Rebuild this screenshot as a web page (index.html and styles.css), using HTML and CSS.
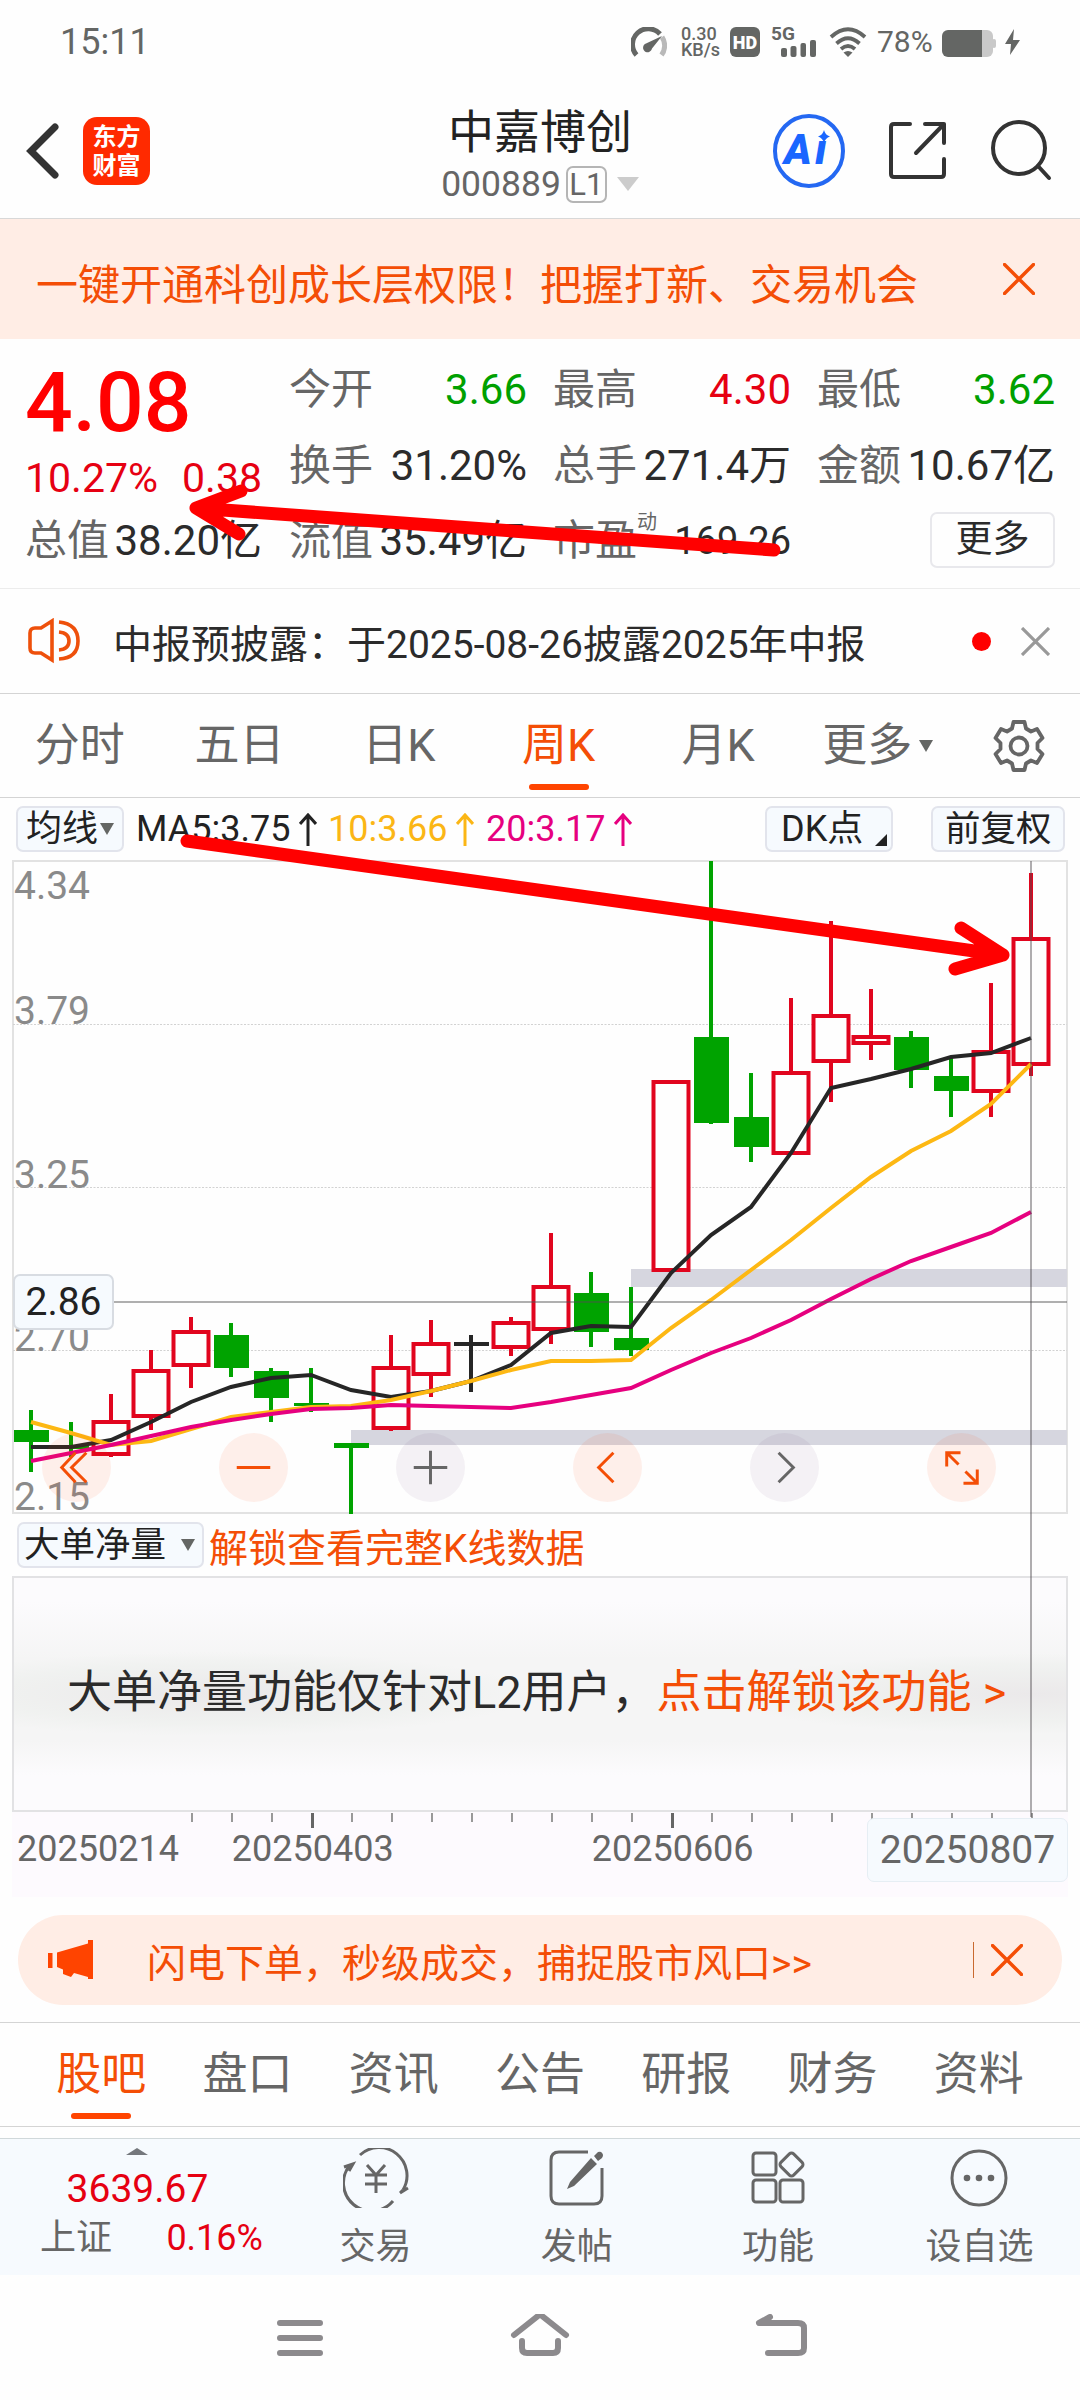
FILE: index.html
```
<!DOCTYPE html>
<html lang="zh-CN">

<head>
  <meta charset="UTF-8">
  <title>中嘉博创 000889</title>
  <link rel="stylesheet" href="styles.css">
</head>

<body>
  <div class="status">
    <div class="time">15:11</div>
    <div class="status-icons">
      <svg class="gauge" width="36" height="30" viewBox="0 0 36 30">
        <path d="M5.500 28A15.500 15.500 0 0 1 29 7" fill="none" stroke="#646664" stroke-width="5" />
        <path d="M31 10A15.500 15.500 0 0 1 30.500 28" fill="none" stroke="#b9b9b9" stroke-width="5" />
        <path d="M31 9L21 21.500A4.500 4.500 0 1 1 15 16.500Z" fill="#646664" />
      </svg>
      <div class="speed">0.30<br>KB/s</div>
      <div class="hd">HD</div>
      <div class="signal">
        <span>5G</span>
        <svg width="36" height="17" viewBox="0 0 36 17">
          <rect x="0" y="8" width="6" height="9" rx="2" />
          <rect x="9.500" y="6" width="6" height="11" rx="2" />
          <rect x="19.500" y="3" width="5.500" height="14" rx="2" />
          <rect x="29" y="0" width="6" height="17" rx="2" />
        </svg>
      </div>
      <svg class="wifi" width="38" height="30" viewBox="0 0 38 30">
        <g fill="none" stroke="#646664" stroke-width="3.800">
          <path d="M2 10Q19-5.500 36 10" />
          <path d="M7.500 16.500Q19 6 30.500 16.500" />
          <path d="M12 22Q19 16 26 22" />
        </g>
        <path d="M19 30L14.500 25.500Q19 22.500 23.500 25.500Z" fill="#646664" />
      </svg>
      <div class="percent">78%</div>
      <svg class="battery" width="54" height="27" viewBox="0 0 54 27">
        <path d="M40 0h5a6 6 0 0 1 6 6v15a6 6 0 0 1-6 6h-5z" fill="#c9c9c9" />
        <rect x="50" y="9" width="4" height="9" rx="2" fill="#c9c9c9" />
        <path d="M6 0h34v27H6a6 6 0 0 1-6-6V6a6 6 0 0 1 6-6z" fill="#646664" />
      </svg>
      <svg width="15" height="26" viewBox="0 0 15 26">
        <path d="M9 0L0 15h6l-1 11 10-15H8z" fill="#646664" />
      </svg>
    </div>
  </div>

  <div class="header">
    <div class="header-left">
      <svg width="34" height="56" viewBox="0 0 34 56">
        <path d="M29 4L5 28l24 24" fill="none" stroke="#333" stroke-width="7" stroke-linecap="round" />
      </svg>
      <div class="logo">东方<br>财富</div>
    </div>
    <div class="header-title">
      <div class="name">中嘉博创</div>
      <div class="code">000889<span class="level">L1</span><i class="down"></i></div>
    </div>
    <div class="header-right">
      <svg width="74" height="76" viewBox="0 0 74 76">
        <ellipse cx="37" cy="38" rx="34" ry="35" fill="none" stroke="#2468f2" stroke-width="4" />
        <text class="ai" x="12" y="51" transform="skewX(0)">A</text>
        <text class="ai" x="43" y="51">ı</text>
        <path d="M52 17q1.200 5 6 6.500q-4.800 1.500-6 6.500q-1.200-5-6-6.500q4.800-1.500 6-6.500z" fill="#1a66ff" />
      </svg>
      <svg width="60" height="62" viewBox="0 0 60 62" fill="none" stroke="#333" stroke-width="4" stroke-linecap="round" stroke-linejoin="round">
        <path d="M22 4H6Q3 4 3 7V54Q3 57 6 57H53Q56 57 56 54V39" />
        <path d="M37 4H56V23M56 4L28 33" />
      </svg>
      <svg width="62" height="62" viewBox="0 0 62 62" fill="none" stroke="#333" stroke-width="4" stroke-linecap="round">
        <circle cx="29" cy="28" r="26" />
        <path d="M48 46L59 58" />
      </svg>
    </div>
  </div>

  <div class="banner">
    <span>一键开通科创成长层权限！把握打新、交易机会</span>
    <svg width="32" height="32" viewBox="0 0 32 32"><path d="M1.500 1.500l29 29m0-29l-29 29" /></svg>
  </div>

  <div class="quote">
    <div class="price">
      <div class="last">4.08</div>
      <div class="change red"><span>10.27%</span><span>0.38</span></div>
      <div class="cell"><label>总值</label><b>38.20亿</b></div>
    </div>
    <div class="cells">
      <div class="cell"><label>今开</label><b class="green">3.66</b></div>
      <div class="cell"><label>最高</label><b class="red">4.30</b></div>
      <div class="cell"><label>最低</label><b class="green">3.62</b></div>
      <div class="cell"><label>换手</label><b>31.20%</b></div>
      <div class="cell"><label>总手</label><b>271.4万</b></div>
      <div class="cell"><label>金额</label><b>10.67亿</b></div>
      <div class="cell"><label>流值</label><b>35.49亿</b></div>
      <div class="cell"><label>市盈<sup>动</sup></label><b class="small">169.26</b></div>
      <div class="cell end"><span class="more">更多</span></div>
    </div>
  </div>

  <div class="notice">
    <svg width="52" height="46" viewBox="0 0 52 46" fill="none" stroke="#ee500b" stroke-width="3.600">
      <path d="M24 3L13 10H7Q2 10 2 15V30Q2 35 7 35H13L24 42Z" />
      <path d="M31 14Q41 15 41 23Q41 31 31 32M31 4Q50 6 50 23Q50 40 31 41" />
    </svg>
    <span class="notice-text">中报预披露：于2025-08-26披露2025年中报</span>
    <i class="dot"></i>
    <svg class="grey-x" width="29" height="29" viewBox="0 0 29 29"><path d="M1 1l27 27m0-27L1 28" /></svg>
  </div>

  <div class="period">
    <div class="tab">分时</div>
    <div class="tab">五日</div>
    <div class="tab">日K</div>
    <div class="tab active">周K</div>
    <div class="tab">月K</div>
    <div class="tab">更多<i class="caret"></i></div>
    <div class="gear">
      <svg width="54" height="54" viewBox="-27 -27 54 54" fill="none" stroke="#666" stroke-width="3.800">
        <path id="gear" stroke-linejoin="round" d="M-5.500-24H5.500L7-17.500L12-14.500L18-17L23.500-8L18.500-3V3L23.500 8L18 17L12 14.500L7 17.500L5.500 24H-5.500L-7 17.500L-12 14.500L-18 17L-23.500 8L-18.500 3V-3L-23.500-8L-18-17L-12-14.500L-7-17.500Z" />
        <circle r="8.500" />
      </svg>
    </div>
  </div>

  <div class="kline">
    <div class="ma-row">
      <div class="chip">均线<i class="caret"></i></div>
      <span class="ma ma5">MA5:3.75<svg width="18" height="33" viewBox="0 0 18 33"><path d="M9 33V2M1 11l8-9 8 9" /></svg></span>
      <span class="ma ma10">10:3.66<svg width="18" height="33" viewBox="0 0 18 33"><path d="M9 33V2M1 11l8-9 8 9" /></svg></span>
      <span class="ma ma20">20:3.17<svg width="18" height="33" viewBox="0 0 18 33"><path d="M9 33V2M1 11l8-9 8 9" /></svg></span>
      <div class="chip dk">DK点</div>
      <div class="chip fq">前复权</div>
    </div>

    <div class="chart">
      <svg id="chart" width="1080" height="654" viewBox="0 860 1080 654"></svg>
      <div class="tools">
        <button class="tool"><svg viewBox="-35 -35 70 70"><path d="M10-15L-5 0L10 15M-1-15L-15 0L-1 15" /></svg></button>
        <button class="tool"><svg viewBox="-35 -35 70 70"><path d="M-17 0H17" /></svg></button>
        <button class="tool grey"><svg viewBox="-35 -35 70 70"><path d="M-17 0H17M0-17V17" /></svg></button>
        <button class="tool"><svg viewBox="-35 -35 70 70"><path d="M6-15L-9 0L6 15" /></svg></button>
        <button class="tool grey"><svg viewBox="-35 -35 70 70"><path d="M-6-15L9 0L-6 15" /></svg></button>
        <button class="tool"><svg viewBox="-35 -35 70 70"><path d="M-1-15H-15V-1M-15-15L-3-3M2 16H16V2M16 16L4 4" /></svg></button>
      </div>
      <div class="cross-h"></div>
      <div class="cross-price">2.86</div>
    </div>

    <div class="sub-row">
      <div class="chip">大单净量<i class="caret"></i></div>
      <span>解锁查看完整K线数据</span>
    </div>

    <div class="locked">大单净量功能仅针对L2用户，<em>点击解锁该功能 &gt;</em></div>

    <div class="axis">
      <svg id="ticks" width="1080" height="17" viewBox="0 0 1080 17"></svg>
      <div class="dates">
        <span>20250214</span>
        <span>20250403</span>
        <span>20250606</span>
        <span class="current">20250807</span>
      </div>
    </div>
    <div class="cross-v"></div>
  </div>

  <div class="promo">
    <svg width="46" height="40" viewBox="0 0 46 40" fill="#ff4400">
      <path d="M0 13h4.500v15H0zM9 12.500L40 3.500V0h5v39h-5v-2L26 33l-3 4-8-3v-4.500L9 27z" />
    </svg>
    <span>闪电下单，秒级成交，捕捉股市风口&gt;&gt;</span>
    <i></i>
    <svg class="close" width="32" height="32" viewBox="0 0 32 32"><path d="M1.500 1.500l29 29m0-29l-29 29" /></svg>
  </div>

  <div class="sections">
    <div class="tab active">股吧</div>
    <div class="tab">盘口</div>
    <div class="tab">资讯</div>
    <div class="tab">公告</div>
    <div class="tab">研报</div>
    <div class="tab">财务</div>
    <div class="tab">资料</div>
  </div>

  <div class="toolbar">
    <div class="index">
      <i class="up"></i>
      <div class="point">3639.67</div>
      <div class="rate"><span>上证</span><span class="red">0.16%</span></div>
    </div>
    <div class="action">
      <svg viewBox="-33 -30 66 60">
        <path d="M-16-23A28 28 0 0 1 27 12M17 23A28 28 0 0 1-26-13" />
        <path d="M24 15L32 10M27 12L24 15M-32-11L-23-14L-27-7" />
        <path d="M-9-13L0-3L9-13M0-3V15M-11-3H11M-11 6H11" />
      </svg>
      <span>交易</span>
    </div>
    <div class="action">
      <svg viewBox="-33 -30 66 60">
        <path d="M11-26H-18Q-26-26-26-18V18Q-26 26-18 26H17Q25 26 25 18V-10" />
        <path class="solid" d="M14-20L20-14L-3 8L-10 11L-7 4ZM17-22L21-26Q24-27 25-25Q27-23 25-20L21-17Z" />
      </svg>
      <span>发帖</span>
    </div>
    <div class="action">
      <svg viewBox="-33 -30 66 60">
        <rect x="-25" y="-25" width="23" height="22" rx="3" />
        <rect x="-25" y="2" width="23" height="22" rx="3" />
        <rect x="2" y="2" width="23" height="22" rx="3" />
        <rect x="4.500" y="-22.500" width="18" height="18" rx="3" transform="rotate(45 13.500 -13.500)" />
      </svg>
      <span>功能</span>
    </div>
    <div class="action">
      <svg viewBox="-33 -30 66 60">
        <ellipse rx="27" ry="27" />
        <g class="solid"><circle cx="-12" r="3.300" /><circle r="3.300" /><circle cx="12" r="3.300" /></g>
      </svg>
      <span>设自选</span>
    </div>
  </div>

  <div class="sysnav">
    <svg viewBox="-30 -24 60 48"><path d="M-20-15H20M-20 0H20M-20 15H20" /></svg>
    <svg viewBox="-30 -24 60 48"><path d="M-26-3L-2-22Q0-24 2-22L26-3M-18 3V10Q-18 15-13 15H13Q18 15 18 10V3" /></svg>
    <svg viewBox="-30 -24 60 48"><path d="M-10-21L-21-15H18Q24-15 24-10V10Q24 15 18 15H-12" /></svg>
  </div>

  <!-- hand-drawn marks over the page -->
  <svg class="marks" width="1080" height="2400" viewBox="0 0 1080 2400">
    <path d="M774 550L196 508M241 491L196 508L239 534" />
    <path d="M187 841L1003 955M961 928L1003 955L955 969" />
  </svg>

  <script src="chart.js"></script>
</body>

</html>
```

FILE: styles.css
```
* {
  box-sizing: border-box;
}

body {
  margin: 0;
  width: 1080px;
  height: 2400px;
  position: relative;
  overflow: hidden;
  background: #fefefe;
  color: #2b2b2b;
  font-family: Roboto, "Noto Sans CJK SC", sans-serif;
}

svg {
  display: block;
  flex: none;
}

i {
  display: block;
}

.red {
  color: #e60012;
}

.green {
  color: #00a000;
}

/* status bar */
.status {
  height: 84px;
  padding: 0 60px;
  display: flex;
  justify-content: space-between;
  color: #646664;
}

.time {
  font-size: 36px;
  line-height: 84px;
}

.status-icons {
  display: flex;
  align-items: center;
  fill: #646664;
}

.speed {
  margin-left: 14px;
  width: 49px;
  font-size: 18px;
  line-height: 16px;
  font-weight: 500;
}

.hd {
  width: 30px;
  height: 30px;
  border-radius: 6px;
  background: #646664;
  color: #fff;
  font-size: 18px;
  line-height: 31px;
  font-weight: 900;
  text-align: center;
}

.signal {
  width: 45px;
  height: 30px;
  margin-left: 11px;
}

.signal span {
  display: block;
  font-size: 19px;
  line-height: 13px;
  height: 13px;
  font-weight: 700;
}

.signal svg {
  margin-left: 10px;
}

.wifi {
  margin-left: 13px;
}

.percent {
  margin-left: 10px;
  width: 65px;
  font-size: 30px;
  line-height: 30px;
}

.battery {
  margin: 2px 9px 0 0;
}

/* title bar */
.header {
  height: 135px;
  display: grid;
  grid-template-columns: 1fr auto 1fr;
  border-bottom: 1px solid #d8d8d8;
}

.header-left {
  display: flex;
  align-items: center;
  padding-left: 26px;
}

.logo {
  margin-left: 23px;
  width: 67px;
  height: 68px;
  padding-top: 6px;
  border-radius: 14px;
  background: #ff2a00;
  color: #fff;
  font-size: 24px;
  line-height: 28.5px;
  font-weight: 700;
  text-align: center;
}

.header-title {
  text-align: center;
  padding-top: 18px;
}

.name {
  font-size: 46px;
  line-height: 60px;
  color: #222;
}

.code {
  display: flex;
  justify-content: center;
  align-items: center;
  height: 44px;
  font-size: 35.5px;
  line-height: 44px;
  color: #666;
}

.level {
  margin: 0 10px 0 5px;
  width: 41px;
  height: 37px;
  border: 2px solid #b5b5b5;
  border-radius: 7px;
  font-size: 31px;
  line-height: 34px;
}

.down {
  border: 11px solid transparent;
  border-top: 14px solid #ccc;
  border-bottom: 0;
}

.header-right {
  display: flex;
  justify-content: flex-end;
  align-items: center;
  gap: 42px;
  padding-right: 28px;
}

.ai {
  font-size: 42px;
  font-weight: 900;
  font-style: italic;
  fill: #1a66ff;
}

.banner {
  height: 120px;
  padding: 0 45px 0 36px;
  display: flex;
  align-items: center;
  justify-content: space-between;
  background: #ffede5;
  color: #f44e06;
  font-size: 42px;
}

.banner span {
  padding-top: 5px;
}

.banner path,
.close path {
  stroke: #f44e06;
  stroke-width: 3.4;
  stroke-linecap: round;
}

/* quote */
.quote {
  height: 250px;
  padding: 12px 25px 0;
  display: flex;
  gap: 27px;
  border-bottom: 1px solid #ececec;
}

.price {
  width: 237px;
}

.last {
  height: 103px;
  font-size: 84px;
  line-height: 103px;
  font-weight: 500;
  color: #f00;
}

.change {
  display: flex;
  justify-content: space-between;
  height: 48px;
  font-size: 41px;
  line-height: 48px;
}

.cells {
  display: grid;
  grid-template-columns: repeat(3, 238px);
  grid-auto-rows: 75.5px;
  column-gap: 26px;
}

.cell {
  display: flex;
  justify-content: space-between;
  height: 75.5px;
  font-size: 42px;
  line-height: 78px;
  white-space: nowrap;
}

.cell label {
  position: relative;
  color: #666;
}

.cell b {
  font-weight: 400;
}

.cell b.small {
  font-size: 38px;
}

.cell sup {
  position: absolute;
  left: 84px;
  top: -19px;
  font-size: 20px;
}

.cell.end {
  justify-content: flex-end;
  align-items: center;
}

.more {
  width: 125px;
  height: 56px;
  border: 2px solid #e8e8ec;
  border-radius: 7px;
  font-size: 37px;
  line-height: 52px;
  text-align: center;
}

/* notice */
.notice {
  height: 105px;
  padding: 0 30px 0 28px;
  display: flex;
  align-items: center;
  border-bottom: 1px solid #d4d4d4;
}

.notice-text {
  margin-left: 33px;
  flex: 1;
  font-size: 39px;
}

.dot {
  width: 19px;
  height: 19px;
  margin-right: 30px;
  border-radius: 50%;
  background: #f00;
}

.grey-x path {
  stroke: #999;
  stroke-width: 3.2;
}

/* tabs */
.period,
.sections {
  display: flex;
  height: 104px;
  border-bottom: 1px solid #d4d4d4;
}

.tab {
  position: relative;
  flex: none;
  width: 159.6px;
  display: flex;
  justify-content: center;
  align-items: center;
  font-size: 45px;
  line-height: 104px;
  color: #666;
}

.tab.active {
  color: #f44e06;
}

.tab.active::after {
  content: "";
  position: absolute;
  left: calc(50% - 30px);
  bottom: 7px;
  width: 60px;
  height: 6px;
  border-radius: 3px;
  background: #ff4400;
}

.caret {
  flex: none;
  border: 7.5px solid transparent;
  border-top: 12px solid #646664;
  border-bottom: 0;
}

.tab .caret {
  margin-left: 7px;
}

.gear {
  flex: 1;
  display: flex;
  justify-content: center;
  align-items: center;
}

/* k line */
.kline {
  position: relative;
}

.ma-row {
  height: 62px;
  padding: 0 15px 0 16px;
  display: flex;
  align-items: center;
  font-size: 36px;
}

.chip {
  position: relative;
  display: flex;
  align-items: center;
  height: 46px;
  padding: 0 8px;
  border: 2px solid #e2e4ec;
  border-radius: 7px;
  background: #f6fafe;
  color: #222;
  font-size: 36px;
  line-height: 42px;
}

.ma-row .chip .caret {
  margin-left: 2px;
}

.ma {
  display: flex;
  align-items: center;
}

.ma svg {
  margin-left: 9px;
  fill: none;
  stroke: currentColor;
  stroke-width: 3;
}

.ma5 {
  width: 192px;
  margin-left: 12px;
  color: #222;
}

.ma10 {
  width: 158px;
  color: #fbb615;
}

.ma20 {
  color: #e6007f;
}

.chip.dk {
  width: 128px;
  margin-left: auto;
  padding-left: 14px;
}

.chip.dk::after {
  content: "";
  position: absolute;
  right: 4px;
  bottom: 4px;
  border-left: 12px solid transparent;
  border-bottom: 12px solid #222;
}

.chip.fq {
  width: 134px;
  margin-left: 38px;
  padding-left: 12px;
  font-size: 35.5px;
  white-space: nowrap;
}

.chart {
  position: relative;
  height: 654px;
}

.chart text {
  font-size: 39px;
  fill: #8a8a8a;
}

.tools {
  position: absolute;
  left: 42px;
  right: 84px;
  top: 573px;
  display: flex;
  justify-content: space-between;
}

.tool {
  width: 69px;
  height: 69px;
  padding: 0;
  border: 0;
  border-radius: 50%;
  background: rgba(255, 68, 0, 0.08);
}

.tool.grey {
  background: rgba(90, 40, 110, 0.06);
}

.tool path {
  fill: none;
  stroke: #f44e06;
  stroke-width: 3;
}

.tool.grey path {
  stroke: #666;
}

.cross-h {
  position: absolute;
  left: 113px;
  right: 13px;
  top: 441px;
  height: 2px;
  background: rgba(80, 80, 80, 0.45);
}

.cross-v {
  position: absolute;
  left: 1030px;
  top: 63px;
  width: 2px;
  height: 956px;
  background: rgba(80, 75, 80, 0.45);
}

.cross-price {
  position: absolute;
  left: 13px;
  top: 414px;
  width: 101px;
  height: 56px;
  border: 2px solid #d8dce2;
  border-radius: 7px;
  background: #f6fafe;
  color: #222;
  font-size: 39px;
  line-height: 52px;
  text-align: center;
}

.sub-row {
  height: 62px;
  padding-left: 17px;
  display: flex;
  align-items: center;
  color: #f44e06;
  font-size: 39px;
}

.sub-row .chip {
  width: 187px;
  margin-right: 5px;
  padding: 0 7px 0 5px;
  justify-content: space-between;
  font-size: 35.5px;
}

.locked {
  margin: 0 12px;
  height: 236px;
  padding-left: 53px;
  border: 2px solid #e2e2e4;
  background:
    radial-gradient(ellipse 320px 42px at 200px 50%, #ebe9ea 0, rgba(238, 240, 238, 0.7) 70%, transparent 100%),
    radial-gradient(ellipse 320px 40px at 1020px 50%, #ebe9ea 0, rgba(238, 240, 238, 0.7) 70%, transparent 100%),
    linear-gradient(#fcfbfd 10%, #f5f5f5 35%, #f5f5f5 70%, #fcfbfd 85%);
  font-size: 45px;
  line-height: 230px;
  white-space: nowrap;
}

.locked em {
  font-style: normal;
  color: #f44e06;
}

.axis {
  height: 85px;
  background: linear-gradient(90deg, transparent 12px, #fdfafe 12px, #fdfafe 1068px, transparent 1068px);
}

.dates {
  height: 66px;
  padding: 0 12px 0 17px;
  display: flex;
  color: #666;
  font-size: 36px;
  line-height: 40px;
}

.dates span:nth-child(2) {
  margin-left: 53px;
}

.dates span:nth-child(3) {
  margin-left: 198px;
}

.dates .current {
  width: 201px;
  height: 64px;
  margin: -11px 0 0 auto;
  border: 1px solid #e6eef4;
  border-radius: 7px;
  background: #f6fafe;
  font-size: 39px;
  line-height: 62px;
  text-align: center;
}

/* promo pill */
.promo {
  margin: 18px 18px 17px;
  height: 90px;
  padding: 0 39px 0 30px;
  display: flex;
  align-items: center;
  border-radius: 45px;
  background: #ffede5;
  color: #f44e06;
  font-size: 39px;
}

.promo span {
  flex: 1;
  margin-left: 53px;
}

.promo i {
  width: 1px;
  height: 36px;
  margin-right: 17px;
  background: #c96a30;
}

.sections {
  height: 105px;
  padding: 0 28px;
  border-top: 1px solid #d4d4d4;
}

.sections .tab {
  width: auto;
  flex: 1;
}

/* bottom bar */
.toolbar {
  display: flex;
  height: 137px;
  margin-top: 11px;
  border-top: 1px solid #d0d8da;
  background: #f6fafe;
}

.index {
  width: 275px;
  display: flex;
  flex-direction: column;
  align-items: center;
}

.up {
  margin-top: 9px;
  border: 11px solid transparent;
  border-bottom: 7px solid #74777c;
  border-top: 0;
}

.point {
  margin-top: 12px;
  font-size: 39px;
  line-height: 44px;
  color: #e60012;
}

.rate {
  align-self: stretch;
  display: flex;
  justify-content: space-between;
  padding: 0 12px 0 40px;
  font-size: 36px;
  line-height: 54px;
  color: #666;
}

.rate .red {
  color: #e60012;
}

.action {
  width: 201.3px;
  display: flex;
  flex-direction: column;
  align-items: center;
  padding-top: 9px;
  font-size: 36px;
  color: #666;
}

.action svg {
  width: 66px;
  height: 60px;
  fill: none;
  stroke: #666;
  stroke-width: 3;
}

.action .solid {
  fill: #666;
  stroke: none;
}

.action span {
  margin-top: 13px;
  line-height: 52px;
}

.sysnav {
  height: 126px;
  padding: 0 180px;
  display: flex;
}

.sysnav svg {
  width: 240px;
  height: 48px;
  margin-top: 39px;
  fill: none;
  stroke: #8c8a8d;
  stroke-width: 6;
  stroke-linecap: round;
  stroke-linejoin: round;
}

.marks {
  position: absolute;
  left: 0;
  top: 0;
  fill: none;
  stroke: #f00;
  stroke-width: 13;
  stroke-linecap: round;
  stroke-linejoin: round;
}
```

FILE: chart.js
```
// [type, high, bodyTop, bodyBottom, low] for each week, one every 40px from x = 31
var candles = [
  ['g', 1410, 1430, 1442, 1472],
  ['g', 1422, 1446, 1449, 1457],
  ['r', 1394, 1420, 1456, 1457],
  ['r', 1350, 1369, 1418, 1430],
  ['r', 1317, 1330, 1367, 1388],
  ['g', 1323, 1335, 1368, 1377],
  ['g', 1368, 1371, 1398, 1422],
  ['g', 1368, 1403, 1406, 1412],
  ['g', 1443, 1443, 1448, 1514],
  ['r', 1335, 1366, 1430, 1431],
  ['r', 1320, 1342, 1376, 1397],
  ['k', 1335, 1342, 1346, 1392],
  ['r', 1317, 1321, 1349, 1356],
  ['r', 1233, 1285, 1331, 1344],
  ['g', 1272, 1293, 1332, 1347],
  ['g', 1287, 1338, 1350, 1356],
  ['r', 1080, 1080, 1272, 1272],
  ['g', 861, 1037, 1123, 1124],
  ['g', 1073, 1117, 1147, 1162],
  ['r', 998, 1071, 1155, 1155],
  ['r', 921, 1014, 1063, 1102],
  ['r', 989, 1035, 1045, 1060],
  ['g', 1031, 1037, 1070, 1088],
  ['g', 1057, 1076, 1091, 1117],
  ['r', 983, 1050, 1093, 1117],
  ['r', 873, 937, 1066, 1076]
];

var lines = {
  '#262626': [1447, 1447, 1440, 1422, 1402, 1387, 1378, 1375, 1390, 1397, 1391, 1381, 1365, 1333, 1326, 1327, 1273, 1235, 1207, 1153, 1088, 1079, 1069, 1057, 1053, 1038],
  '#fdb813': [1422, 1433, 1445, 1441, 1429, 1417, 1412, 1407, 1406, 1400, 1391, 1381, 1370, 1361, 1361, 1360, 1328, 1300, 1270, 1240, 1208, 1177, 1151, 1131, 1104, 1064],
  '#e6007f': [1461, 1453, 1445, 1436, 1427, 1420, 1414, 1409, 1408, 1405, 1406, 1407, 1408, 1402, 1395, 1388, 1370, 1353, 1338, 1320, 1299, 1279, 1261, 1247, 1233, 1212]
};

var colors = { g: '#00a300', r: '#e1051e', k: '#262626' };
var labels = [['4.34', 899], ['3.79', 1024], ['3.25', 1188], ['2.70', 1351], ['2.15', 1510]];

function xAt(i) {
  return 31 + i * 40;
}

function rect(x, y, w, h, attrs) {
  return '<rect x="' + x + '" y="' + y + '" width="' + w + '" height="' + h + '" ' + attrs + '/>';
}

function drawChart() {
  var out = rect(13, 861, 1054, 652, 'fill="none" stroke="#e2e2e2" stroke-width="2"');

  [1024.5, 1187.5, 1350.5].forEach(function (y) {
    out += '<path d="M13 ' + y + 'H1067" stroke="#d2d2d2" stroke-dasharray="2 1.5"/>';
  });
  labels.forEach(function (l) {
    out += '<text x="14" y="' + l[1] + '">' + l[0] + '</text>';
  });

  // gap zones
  out += rect(631, 1269, 436, 18, 'fill="#d6d6df"');
  out += rect(351, 1430, 716, 15, 'fill="#d6d6df"');

  candles.forEach(function (c, i) {
    var x = xAt(i);
    var color = colors[c[0]];
    if (c[0] === 'r') {
      out += rect(x - 2, c[1], 4, c[2] - c[1], 'fill="' + color + '"');
      out += rect(x - 2, c[3], 4, c[4] - c[3], 'fill="' + color + '"');
      out += rect(x - 17.5, c[2] + 2, 35, c[3] - c[2] - 4, 'fill="#fefefe" stroke="' + color + '" stroke-width="4"');
    } else {
      out += rect(x - 2, c[1], 4, c[4] - c[1], 'fill="' + color + '"');
      out += rect(x - 17, c[2], 35, c[3] - c[2], 'fill="' + color + '"');
    }
  });

  Object.keys(lines).forEach(function (color) {
    var points = lines[color].map(function (y, i) {
      return xAt(i) + ',' + y;
    });
    out += '<polyline points="' + points.join(' ') + '" fill="none" stroke="' + color + '" stroke-width="4"/>';
  });

  document.getElementById('chart').innerHTML = out;
}

function drawTicks() {
  var out = '';
  for (var i = 4; i < candles.length; i++) {
    var major = i === 7 || i === 16;
    out += rect(xAt(i), 1, major ? 3 : 2, major ? 15 : 9, 'fill="' + (major ? '#666' : '#999') + '"');
  }
  document.getElementById('ticks').innerHTML = out;
}

drawChart();
drawTicks();
```
